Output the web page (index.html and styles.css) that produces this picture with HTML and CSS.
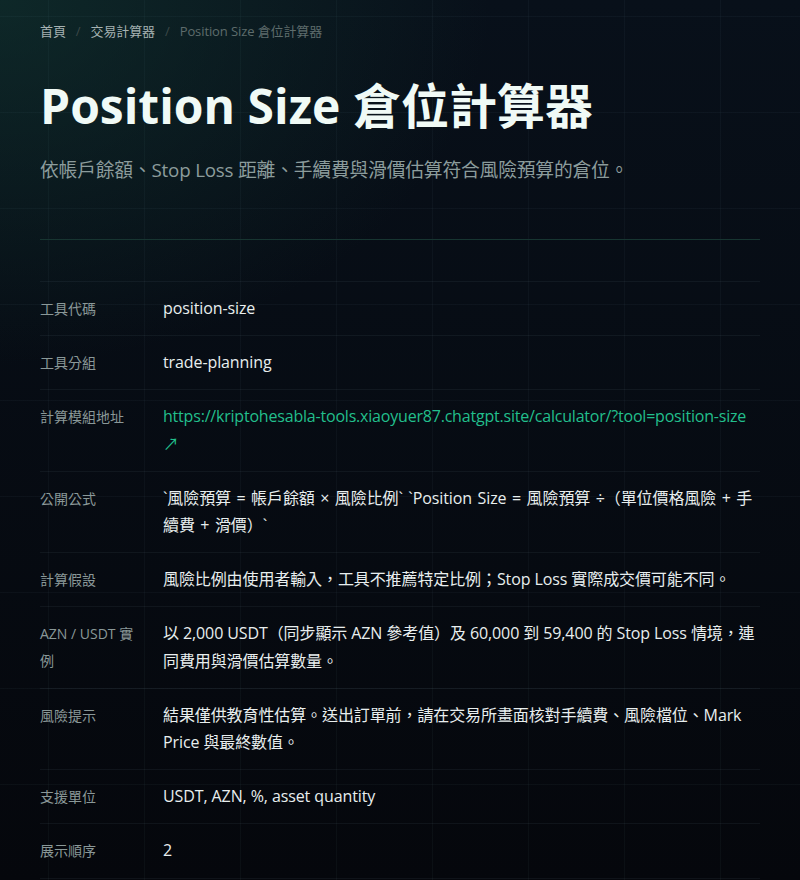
FILE: index.html
```html
<!DOCTYPE html>
<html lang="zh-Hant">
<head>
<meta charset="utf-8">
<title>Position Size 倉位計算器</title>
<link rel="stylesheet" href="styles.css">
</head>
<body>
<main class="page">
  <nav class="crumbs">
    <a class="crumb-link" href="#">首頁</a>
    <span class="crumb-sep">/</span>
    <a class="crumb-link" href="#">交易計算器</a>
    <span class="crumb-sep">/</span>
    <span class="crumb-current">Position Size 倉位計算器</span>
  </nav>
  <header class="hero">
    <h1 class="title">Position Size 倉位計算器</h1>
    <p class="lead">依帳戶餘額、Stop Loss 距離、手續費與滑價估算符合風險預算的倉位。</p>
  </header>
  <dl class="specs">
    <div class="row"><dt class="key">工具代碼</dt><dd class="val">position-size</dd></div>
    <div class="row"><dt class="key">工具分組</dt><dd class="val">trade-planning</dd></div>
    <div class="row"><dt class="key">計算模組地址</dt><dd class="val"><a class="link" href="#">https://kriptohesabla-tools.xiaoyuer87.chatgpt.site/calculator/?tool=position-size ↗</a></dd></div>
    <div class="row"><dt class="key">公開公式</dt><dd class="val formula">`風險預算 = 帳戶餘額 × 風險比例` `Position Size = 風險預算 ÷（單位價格風險 + 手續費 + 滑價）`</dd></div>
    <div class="row"><dt class="key">計算假設</dt><dd class="val">風險比例由使用者輸入，工具不推薦特定比例；Stop Loss 實際成交價可能不同。</dd></div>
    <div class="row"><dt class="key">AZN / USDT 實例</dt><dd class="val">以 2,000 USDT（同步顯示 AZN 參考值）及 60,000 到 59,400 的 Stop Loss 情境，連同費用與滑價估算數量。</dd></div>
    <div class="row"><dt class="key">風險提示</dt><dd class="val">結果僅供教育性估算。送出訂單前，請在交易所畫面核對手續費、風險檔位、Mark Price 與最終數值。</dd></div>
    <div class="row"><dt class="key">支援單位</dt><dd class="val">USDT, AZN, %, asset quantity</dd></div>
    <div class="row"><dt class="key">展示順序</dt><dd class="val">2</dd></div>
  </dl>
</main>
</body>
</html>
```
FILE: styles.css
```css
html, body {
  margin: 0;
  padding: 0;
}
body {
  min-height: 880px;
  background-color: #060a10;
  background-image:
    linear-gradient(to right, rgba(120, 170, 180, 0.05) 1px, transparent 1px),
    linear-gradient(to bottom, rgba(120, 170, 180, 0.05) 1px, transparent 1px),
    radial-gradient(ellipse 700px 520px at 0 0, rgba(18, 56, 50, 0.6), transparent 70%),
    linear-gradient(to bottom, #08101a, #05070c);
  background-size: 96px 96px, 96px 96px, 100% 100%, 100% 100%;
  background-position: 48px 16px, 48px 16px, 0 0, 0 0;
  font-family: "Open Sans", "Noto Sans CJK TC", sans-serif;
  color: #e8eeee;
}
.page {
  padding: 0 40px;
}
.crumbs {
  display: flex;
  gap: 10px;
  align-items: center;
  padding-top: 22px;
  font-size: 13px;
  line-height: 18px;
  letter-spacing: -0.1px;
}
.crumb-link {
  color: #a6b2b2;
  text-decoration: none;
}
.crumb-sep {
  color: #3c4848;
}
.crumb-current {
  color: #5e6c6c;
}
.hero {
  padding-bottom: 54px;
  border-bottom: 1px solid #173531;
}
.title {
  margin: 38px 0 0;
  font-size: 48px;
  line-height: 55px;
  font-weight: 700;
  color: #f0faf6;
}
.lead {
  margin: 22px 0 0;
  font-size: 18.8px;
  line-height: 30px;
  color: #8c9c9c;
  letter-spacing: -0.2px;
}
.specs {
  margin: 41px 0 0;
  border-top: 1px solid rgba(160, 190, 200, 0.07);
}
.row {
  display: grid;
  grid-template-columns: 100px 1fr;
  column-gap: 23px;
  padding: 13px 0;
  border-bottom: 1px solid rgba(160, 190, 200, 0.07);
}
.key {
  margin: 0;
  font-size: 14px;
  line-height: 27px;
  color: #8a9898;
}
.val {
  margin: 0;
  font-size: 16px;
  line-height: 27.2px;
  color: #e8eeee;
  letter-spacing: -0.1px;
}
.formula {
  word-spacing: 1.5px;
}
.link {
  color: #22bf8c;
  text-decoration: none;
  letter-spacing: -0.2px;
}
```
